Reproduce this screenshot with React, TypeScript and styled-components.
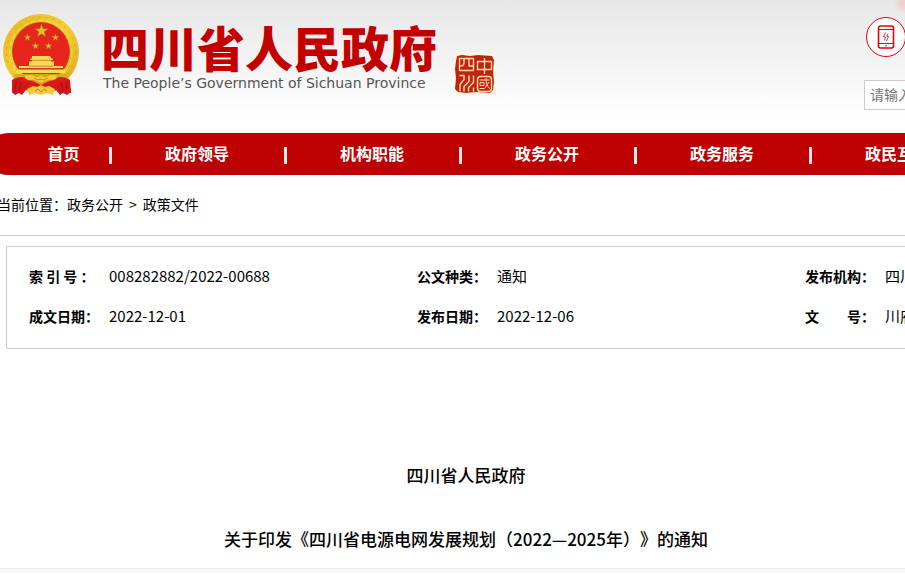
import React from "react";
import styled, { createGlobalStyle } from "styled-components";

const GlobalStyle = createGlobalStyle`
  * { box-sizing: border-box; }
  body {
    margin: 0;
    background: #fff;
    color: #000;
    font-family: "Noto Sans CJK SC", sans-serif;
    font-size: 14px;
  }
  a { color: inherit; text-decoration: none; }
`;

const Page = styled.div`
  overflow: hidden;
`;

const Header = styled.header`
  display: flex;
  justify-content: space-between;
  height: 133px;
  background:
    radial-gradient(circle at 100% 2px, #f3cfcf 4px, transparent 12px),
    linear-gradient(#e7e7e7, #fff 118px);
`;

const Brand = styled.a`
  display: flex;
  align-items: flex-start;
  padding: 13px 0 0 2px;
`;

const BrandText = styled.div`
  margin: 4px 0 0 20px;
`;

const SiteName = styled.h1`
  margin: 0;
  color: #c30000;
  font-size: 48px;
  font-weight: 900;
  line-height: 58px;
  white-space: nowrap;
`;

const SiteNameEn = styled.p`
  margin: 0 0 0 2px;
  color: #555;
  font-family: "DejaVu Sans", sans-serif;
  font-size: 14px;
  line-height: 16px;
  white-space: nowrap;
`;

const SealSvg = styled.svg`
  margin: 40px 0 0 17px;
`;

const Tools = styled.div`
  flex: none;
  width: 41px;
  padding-top: 17px;
`;

const MobileLink = styled.a`
  display: flex;
  align-items: center;
  justify-content: center;
  width: 40px;
  height: 40px;
  margin-left: 2px;
  border: 1px solid #e60012;
  border-radius: 50%;
  background: #fff;
`;

const SearchInput = styled.input`
  display: block;
  width: 240px;
  height: 30px;
  margin-top: 23px;
  padding: 0 5px 2px;
  border: 1px solid #ccc;
  border-radius: 0;
  background: #fff;
  font: inherit;
  &::placeholder { color: #757575; opacity: 1; }
`;

const Nav = styled.nav`
  display: flex;
  min-width: 1200px;
  height: 42px;
  margin-left: -13px;
  border-radius: 21px;
  background: #be0000;
`;

const NavItem = styled.a<{ $first?: boolean }>`
  position: relative;
  flex: none;
  width: ${(p) => (p.$first ? 124 : 175)}px;
  padding-left: ${(p) => (p.$first ? 32 : 0)}px;
  padding-right: 3px;
  color: #fff;
  font-size: 16px;
  font-weight: 700;
  line-height: 40px;
  text-align: center;

  &::after {
    content: "";
    position: absolute;
    top: 14px;
    right: -1px;
    width: 3px;
    height: 17px;
    background: #fbe9e9;
  }
`;

const Breadcrumb = styled.nav`
  display: flex;
  gap: 6px;
  height: 61px;
  margin-left: -3px;
  border-bottom: 1px solid #ccc;
  line-height: 58px;
`;

const Crumbs = styled.span`
  margin-right: -6px;
`;

const InfoPanel = styled.dl`
  display: grid;
  grid-template-columns: repeat(3, 388px);
  grid-auto-rows: 40px;
  min-width: 1180px;
  margin: 10px 0 0 6px;
  padding: 10px 0 11px 22px;
  border: 1px solid #ccc;
`;

const InfoItem = styled.div`
  display: flex;
  line-height: 38px;
  white-space: pre;
`;

const Label = styled.dt`
  width: 80px;
  font-weight: 700;
`;

const Value = styled.dd`
  margin: 0;
  font-size: 15px;
`;

const Article = styled.article`
  display: grid;
  gap: 32px;
  padding: 110px 0 13px 27px;
  font-size: 17px;
  font-weight: 500;
  line-height: 32px;
  text-align: center;
  text-spacing-trim: space-all;
`;

const Heading = styled.h2`
  margin: 0;
  font: inherit;
`;

const Footer = styled.footer`
  height: 6px;
  border-top: 1px solid #eee;
  background: #f8f8f8;
`;

const star = (cx: number, cy: number, r: number) =>
  Array.from({ length: 10 }, (_, i) => {
    const a = (Math.PI * i) / 5 - Math.PI / 2;
    const d = i % 2 ? r * 0.4 : r;
    return `${(cx + d * Math.cos(a)).toFixed(2)},${(cy + d * Math.sin(a)).toFixed(2)}`;
  }).join(" ");

const Emblem = () => (
  <svg width="79" height="83" viewBox="0 0 79 83" aria-hidden="true">
    <defs>
      <linearGradient id="gold" x1="0" y1="0" x2="1" y2="1">
        <stop offset="0" stopColor="#e6b620" />
        <stop offset=".5" stopColor="#f2cf35" />
        <stop offset="1" stopColor="#dfa51b" />
      </linearGradient>
    </defs>
    <ellipse cx="39" cy="39" rx="38" ry="38" fill="url(#gold)" />
    <ellipse cx="39" cy="39" rx="34.5" ry="35" fill="none" stroke="#d9a620" strokeWidth="1" strokeDasharray="2 5" />
    <ellipse cx="39" cy="39" rx="31" ry="31.5" fill="none" stroke="#f9de5a" strokeWidth="1" strokeDasharray="5 3" />
    <ellipse cx="39" cy="38.5" rx="28.5" ry="29" fill="#e8251c" stroke="#a8481a" strokeWidth=".7" />
    <g fill="#e6bd30" stroke="#a5700f" strokeWidth=".5">
      <polygon points={star(39.5, 18, 7)} />
      <polygon points={star(25.5, 24.5, 3.7)} />
      <polygon points={star(53.5, 24.5, 3.7)} />
      <polygon points={star(33.5, 33, 3.7)} />
      <polygon points={star(46.5, 33, 3.7)} />
    </g>
    <path d="M30 43h18l1 2 2 1v1H28v-1l2-1zM30 47h19v1.500H30zM27 48.500h25V53H27zM17 53h44v2H17zM15 56.500h48V60H15z" fill="#fadb55" />
    <path d="M29 47.300h21M27 53.200h25M17 55.700h44" stroke="#b5521a" strokeWidth=".6" />
    <path d="M12 61h54l2 17-12-5-34 1-12 4z" fill="#e2a91f" />
    <path d="M10 67c6-4 13-4 19 0l10 5 10-5c6-4 13-4 19 0l1 13-13-3-10 2H32l-9-2-13 3z" fill="#d91a1a" />
    <path d="M11 67l-1 12 3 3 4-2 3 2 7-9M67 67l2 12-4 3-4-2-3 2-7-9" fill="#d3161a" />
    <path d="M14 68l-1 11M19 69l-2 10M65 68l-1 11M59 69l2 10" stroke="#a00f15" strokeWidth="1" />
    <path d="M22 62c4 0 6-1 9 0l4 2 4-2 4 2 4-2c3-1 5 0 9 0-1 5-6 6-9 5l-8 3-8-3c-4 1-8 0-9-5z" fill="#f3ce3a" stroke="#c7891b" strokeWidth=".6" />
    <path d="M25 76l6-3 4 1 4-2 4 2 4-1 6 3-2 6-6-2-6 2-6-2-6 2z" fill="#f1ca37" />
    <path d="M32 65l4 2 3-1 3 1 4-2M33 78l3-2 3 3 3-3 3 2" fill="none" stroke="#ad791b" strokeWidth=".8" />
  </svg>
);

const Seal = () => (
  <SealSvg width="42" height="42" viewBox="0 0 42 42" aria-hidden="true">
    <rect width="42" height="42" rx="5" fill="#fffadf" />
    <path d="M3 3l5-1 8 1 8-1 14 1 2 4-1 12 1 10-1 8-3 3-14-1-10 1-8-1-3-3 1-11-1-9 1-8z" fill="#c0230f" />
    <g fill="none" stroke="#fbe0ae" strokeWidth="1.400" strokeLinejoin="round">
      <path d="M5.500 5.500h14v12h-14zM10 6v4q0 3-4 3M15 6v7h4" />
      <path d="M23.500 8.500h14v8h-14zM30.500 5v16" />
      <path d="M5.500 22.500H10v4l-4 5v7M10 38.500v-5l5-5v-6M14.500 38.500v-4l5-5v-7M19.500 38.500v-4" />
      <rect x="23.500" y="23.500" width="14" height="15" rx="3" />
      <path d="M25.500 27h10M26 29.500h4v3h-4zM25.500 35.500h5M32 25c0 5 1 8 4 11M35 29l-4 6" strokeWidth="1" />
    </g>
  </SealSvg>
);

const PhoneIcon = () => (
  <svg width="18" height="24" viewBox="0 0 18 24" fill="none" stroke="#e60012" aria-hidden="true">
    <rect x="1.500" y="1" width="15" height="22" rx="2" strokeWidth="1.600" />
    <path d="M2 4.500h14M2 18.500h14" />
    <path d="M8.500 7.500l-2 4.500h2l-1 3.500M11 8.500l-1 3h1.500l-2 4.500" strokeWidth=".8" />
    <circle cx="9" cy="20.700" r=".8" fill="#e60012" stroke="none" />
  </svg>
);

const navItems = ["首页", "政府领导", "机构职能", "政务公开", "政务服务", "政民互动"];

const info = [
  ["索 引 号 ：", "008282882/2022-00688"],
  ["公文种类：", "通知"],
  ["发布机构：", "四川省人民政府"],
  ["成文日期：", "2022-12-01"],
  ["发布日期：", "2022-12-06"],
  ["文\u3000\u3000号：", "川府发〔2022〕34号"],
];

export default function App() {
  return (
    <Page>
      <GlobalStyle />
      <Header>
        <Brand href="#">
          <Emblem />
          <BrandText>
            <SiteName>四川省人民政府</SiteName>
            <SiteNameEn>The People’s Government of Sichuan Province</SiteNameEn>
          </BrandText>
          <Seal />
        </Brand>
        <Tools>
          <MobileLink href="#" aria-label="手机版">
            <PhoneIcon />
          </MobileLink>
          <SearchInput type="text" aria-label="搜索" placeholder="请输入关键字" />
        </Tools>
      </Header>
      <Nav>
        {navItems.map((item, i) => (
          <NavItem key={item} href="#" $first={i === 0}>
            {item}
          </NavItem>
        ))}
      </Nav>
      <Breadcrumb>
        <Crumbs>当前位置：</Crumbs>
        <a href="#">政务公开</a>
        <span>&gt;</span>
        <a href="#">政策文件</a>
      </Breadcrumb>
      <InfoPanel>
        {info.map(([label, value]) => (
          <InfoItem key={label}>
            <Label>{label}</Label>
            <Value>{value}</Value>
          </InfoItem>
        ))}
      </InfoPanel>
      <Article>
        <Heading>四川省人民政府</Heading>
        <Heading as="p">关于印发《四川省电源电网发展规划（2022—2025年）》的通知</Heading>
      </Article>
      <Footer />
    </Page>
  );
}
